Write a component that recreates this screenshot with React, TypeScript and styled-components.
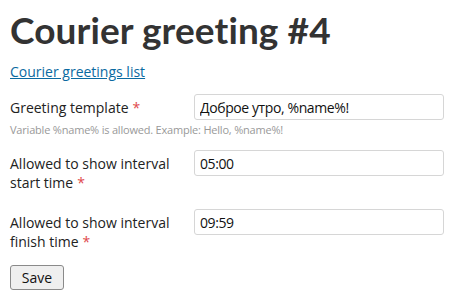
import styled, { createGlobalStyle } from 'styled-components'

const GlobalStyle = createGlobalStyle`
  body {
    margin: 0;
    background: #fff;
    font-family: "Open Sans", "DejaVu Sans", sans-serif;
    color: #222;
  }
`

const Page = styled.div`
  padding: 7px 10px;
`

const Title = styled.h1`
  margin: 0;
  font-family: Lato, "Open Sans", sans-serif;
  font-size: 37px;
  line-height: 46px;
  font-weight: 700;
  letter-spacing: 0.1px;
  font-variant-ligatures: none;
  color: #333;
`

const BackLink = styled.a`
  display: inline-block;
  margin-top: 10px;
  font-size: 14px;
  line-height: 18px;
  color: #0a6aa1;
  text-decoration: underline;
`

const Form = styled.form`
  margin-top: 12px;
  display: flex;
  flex-direction: column;
`

const Field = styled.div`
  display: grid;
  grid-template-columns: 184px 250px;
  align-items: start;
  margin-bottom: 17px;
`

const Label = styled.label`
  font-size: 14px;
  line-height: 19px;
  padding-top: 4px;
  padding-right: 18px;
`

const Required = styled.span`
  color: #e0484b;
  margin-left: 4px;
`

const Control = styled.div`
  display: flex;
  flex-direction: column;
`

const Input = styled.input`
  box-sizing: border-box;
  width: 250px;
  height: 26px;
  border: 1px solid #d6d6d6;
  border-radius: 3px;
  padding: 0 5px;
  font-family: inherit;
  font-size: 14px;
  letter-spacing: -0.4px;
  color: #111;
`

const Hint = styled.div`
  grid-column: 1 / 3;
  margin-top: 3px;
  margin-bottom: -4px;
  font-size: 11px;
  line-height: 14px;
  letter-spacing: -0.2px;
  color: #999;
`

const SaveButton = styled.button`
  align-self: flex-start;
  margin-top: -3px;
  width: 54px;
  height: 25px;
  font-family: inherit;
  font-size: 14px;
  color: #111;
  background: #efefef;
  border: 1px solid #8a8a8a;
  border-radius: 3px;
`

interface FieldDef {
  label: string
  value: string
  hint?: string
}

const fields: FieldDef[] = [
  { label: 'Greeting template', value: 'Доброе утро, %name%!', hint: 'Variable %name% is allowed. Example: Hello, %name%!' },
  { label: 'Allowed to show interval start time', value: '05:00' },
  { label: 'Allowed to show interval finish time', value: '09:59' },
]

export default function App() {
  return (
    <>
      <GlobalStyle />
      <Page>
        <Title>Courier greeting #4</Title>
        <BackLink href="#">Courier greetings list</BackLink>
        <Form onSubmit={e => e.preventDefault()}>
          {fields.map(f => (
            <Field key={f.label}>
              <Label>
                {f.label}
                <Required>*</Required>
              </Label>
              <Control>
                <Input defaultValue={f.value} />
              </Control>
              {f.hint && <Hint>{f.hint}</Hint>}
            </Field>
          ))}
          <SaveButton type="submit">Save</SaveButton>
        </Form>
      </Page>
    </>
  )
}
